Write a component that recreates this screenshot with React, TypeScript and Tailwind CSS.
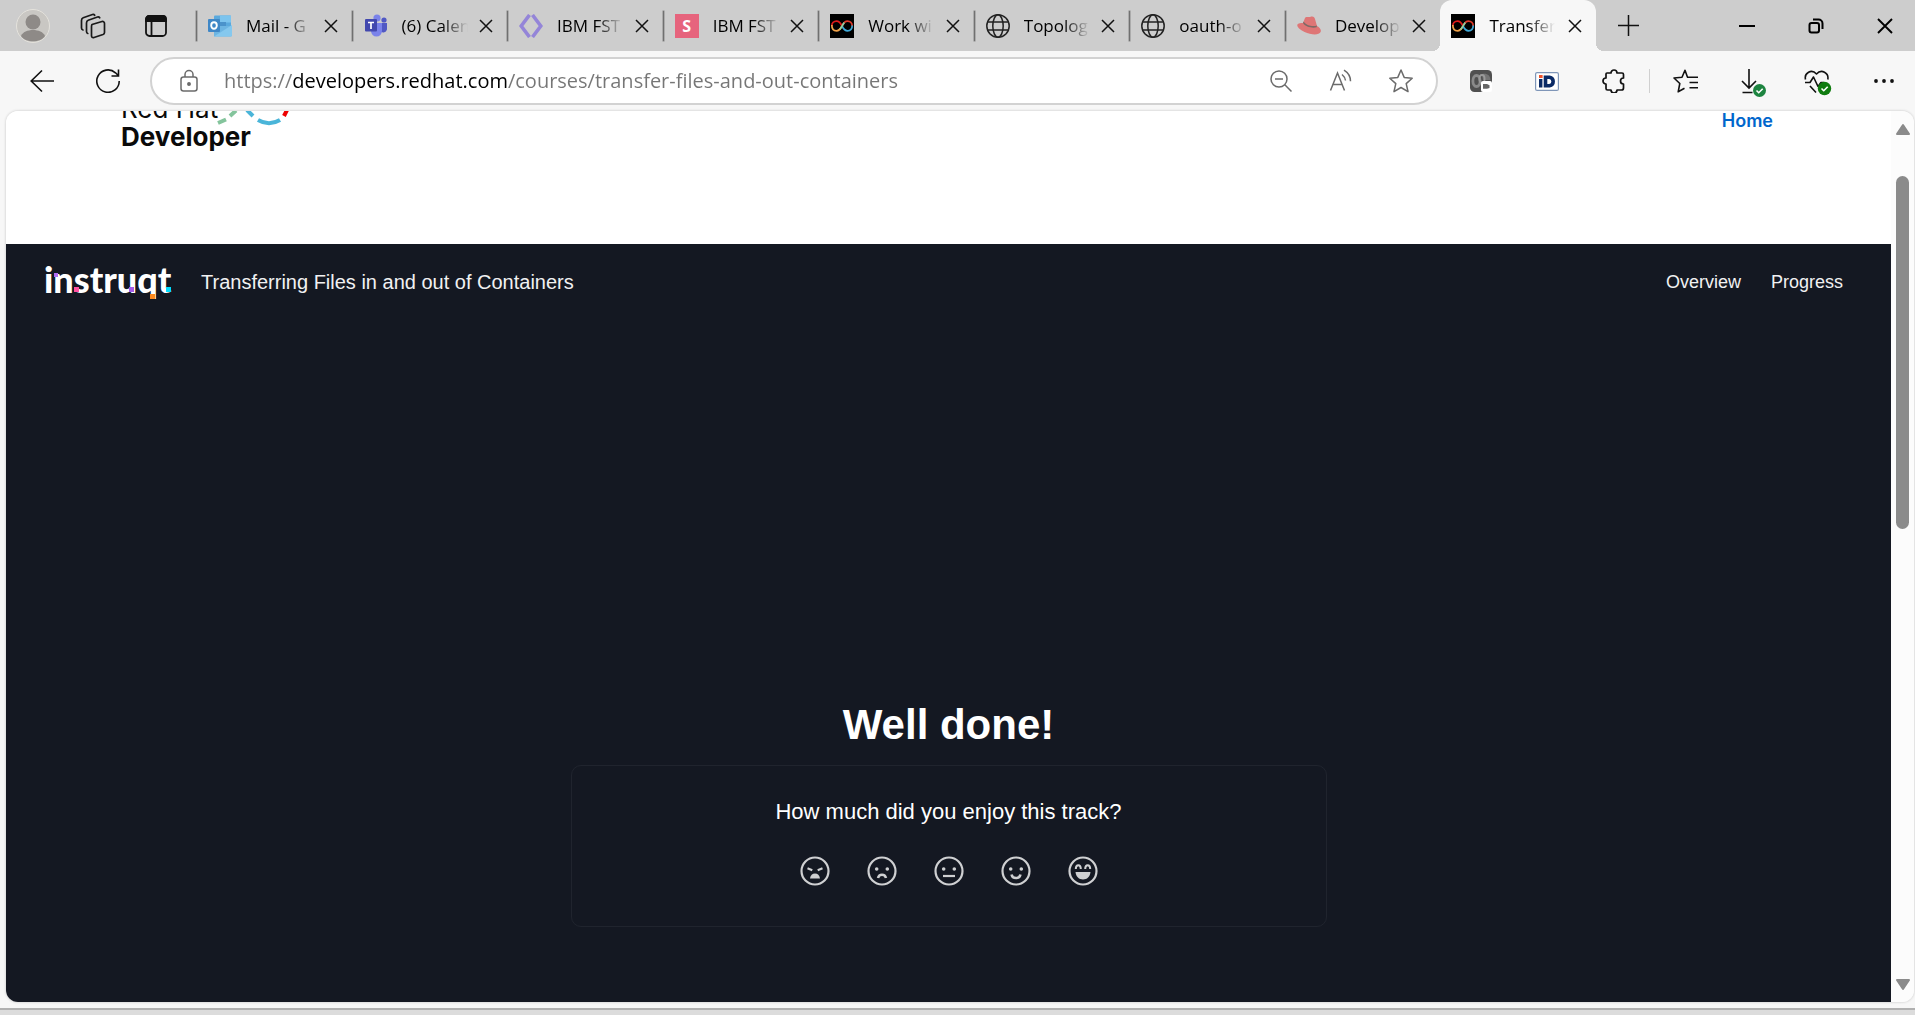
import type { ReactNode } from "react";

const ui = "font-['Open_Sans','Noto_Sans',sans-serif]";

function Outlook() {
  return (
    <svg viewBox="0 0 24 24" className="size-6" aria-hidden="true">
      <rect x="6" y="1.500" width="17" height="20.500" rx="1" fill="#5aa9dd" />
      <rect x="12" y="1.500" width="11" height="7" fill="#7cc4ee" />
      <rect x="12" y="8" width="6" height="6" fill="#4b93cb" />
      <path d="M6 12l18 0v9a1.500 1.500 0 0 1-1.500 1.500H6z" fill="#6db5e2" />
      <path d="M6 22.500L24 11v10a1.500 1.500 0 0 1-1.500 1.500z" fill="#85c8ee" />
      <rect x="0" y="5" width="12" height="13" rx="1" fill="#3f87c6" />
      <ellipse cx="6" cy="11.500" rx="2.800" ry="3.200" fill="none" stroke="#fff" strokeWidth="1.900" />
    </svg>
  );
}

function Teams() {
  return (
    <svg viewBox="0 0 24 24" className="size-6" aria-hidden="true">
      <circle cx="20" cy="6" r="2.600" fill="#5058c4" />
      <path d="M16 9h7v6.500a3.800 3.800 0 0 1-7 1z" fill="#5058c4" />
      <circle cx="13" cy="4" r="3.600" fill="#7a82ea" />
      <path d="M7 9h11v8a5.500 5.500 0 0 1-11 0z" fill="#7a82ea" />
      <rect x="1" y="5" width="12" height="12.500" rx="1" fill="#4248ae" />
      <path d="M4 8.500h6M7 8.500v6.500" stroke="#fff" strokeWidth="1.700" />
    </svg>
  );
}

function Brackets() {
  return (
    <svg viewBox="0 0 24 24" className="size-6" aria-hidden="true" fill="none" stroke="#9485d8" strokeWidth="3.600">
      <path d="M10.500 1L2.200 12l8.300 11M13.500 1L21.800 12l-8.300 11" />
    </svg>
  );
}

function Square() {
  return (
    <span className={`flex size-6 items-center justify-center bg-[#e6647d] text-base font-bold leading-none text-white ${ui}`}>S</span>
  );
}

function Infinity() {
  return (
    <svg viewBox="0 0 24 24" className="size-6" aria-hidden="true" fill="none" strokeWidth="1.700">
      <rect width="24" height="24" fill="#000" />
      <path d="M1.800 12C1.800 9 4 7.200 6.500 7.200S10.500 9 12 12" stroke="#e01a1a" />
      <path d="M1.800 11C1.800 15 4 16.800 6.500 16.800S10.500 15 12 12" stroke="#f0a24a" />
      <path d="M12 12C13.500 9 15 7.200 17.500 7.200S22.200 9 22.200 12" stroke="#e03a2a" />
      <path d="M12 12C13.500 15 15 16.800 17.500 16.800S22.200 15 22.200 11.500" stroke="#3fa9d8" />
      <path d="M9.800 15.300C11 14 13 10 14.300 8.600" stroke="#8fd0a0" />
    </svg>
  );
}

function Globe() {
  return (
    <svg viewBox="0 0 24 24" className="size-6" aria-hidden="true" fill="none" stroke="#222" strokeWidth="1.500">
      <circle cx="12" cy="12" r="11.200" />
      <ellipse cx="12" cy="12" rx="5.200" ry="11.200" />
      <path d="M1.800 8h20.400M1.800 16h20.400" />
    </svg>
  );
}

function Fedora() {
  return (
    <svg viewBox="0 0 24 24" className="size-6" aria-hidden="true">
      <path d="M6 9L8 4c1-2 3-.6 5-1 3-1 4.500 0 5 2l2 7c3 1.500 4.500 4 3.600 6-1.600 3.500-9.600 3-16 0C2 15.500-.5 12.500.4 10.500 1 9 4 9 6 9z" fill="#de7676" />
      <path d="M6 9c2 3.500 9 5.600 13.600 4.300L20 11.500c-4 1.500-11 0-13.400-4z" fill="#7d6a66" />
    </svg>
  );
}

function Cross() {
  return (
    <svg viewBox="0 0 14 14" className="size-[14px]" aria-hidden="true" fill="none" stroke="#111" strokeWidth="1.500">
      <path d="M1 1l12 12M13 1L1 13" />
    </svg>
  );
}

const tabs: { title: string; icon: ReactNode; active?: boolean }[] = [
  { title: "Mail - G", icon: <Outlook /> },
  { title: "(6) Calen", icon: <Teams /> },
  { title: "IBM FST", icon: <Brackets /> },
  { title: "IBM FST", icon: <Square /> },
  { title: "Work wi", icon: <Infinity /> },
  { title: "Topolog", icon: <Globe /> },
  { title: "oauth-o", icon: <Globe /> },
  { title: "Develop", icon: <Fedora /> },
  { title: "Transfer", icon: <Infinity />, active: true },
];

function TabStrip() {
  return (
    <header className="flex h-[51px] shrink-0 bg-[#cdcdcd]">
      <div className="flex w-[196px] shrink-0 items-center gap-[30px] pl-4">
        <button aria-label="Profile" className="size-[34px]">
          <svg viewBox="0 0 34 34" className="size-[34px]">
            <circle cx="17" cy="17" r="16.500" fill="#c9c7c3" stroke="#e4e2dc" />
            <circle cx="17" cy="13" r="7.500" fill="#8e8a87" />
            <path d="M5 27c3-8 21-8 24 0-4 7-20 7-24 0z" fill="#8e8a87" />
          </svg>
        </button>
        <button aria-label="Workspaces" className="size-[26px]">
          <svg viewBox="0 0 26 26" className="size-[26px]" fill="none" stroke="#1a1a1a" strokeWidth="1.700" strokeLinejoin="round" strokeLinecap="round">
            <path d="M12 11.500l10-3a2 2 0 0 1 2.500 2v9c0 1-.5 1.600-1.500 2l-9 3c-1.500.5-2.500-.3-2.500-1.700v-9c0-1.100.2-1.800.5-2.300z" />
            <path d="M7.800 20.500c-1-.3-1.300-1-1.300-2V10c0-1.500.5-2.400 1.700-2.800L17.500 4c1-.3 1.700 0 2.200.8" />
            <path d="M3 17c-1-.3-1.500-1-1.500-2V7.500c0-1.500.5-2.300 1.700-2.700L12.500 1.500c1-.3 1.700 0 2.200.8" />
          </svg>
        </button>
        <button aria-label="Tab actions" className="ml-2 size-6">
          <svg viewBox="0 0 24 24" className="size-6" fill="none" stroke="#111" strokeWidth="1.800">
            <rect x="2" y="2" width="20" height="20" rx="3.500" />
            <path d="M2 7V5a3 3 0 0 1 3-3h14a3 3 0 0 1 3 3v2z" fill="#111" />
            <path d="M7.500 7v15" />
          </svg>
        </button>
      </div>
      <nav aria-label="Tabs" className="grid min-w-0 flex-1 grid-cols-9">
        {tabs.map((t, i) => (
          <div key={i} className={t.active ? "relative flex items-center rounded-t-xl bg-[#f7f7f7]" : "relative flex items-center"}>
            {t.active ? (
              <>
                <span className="absolute -left-2 bottom-0 size-2 bg-[radial-gradient(circle_at_top_left,transparent_8px,#f7f7f7_8px)]" />
                <span className="absolute -right-2 bottom-0 size-2 bg-[radial-gradient(circle_at_top_right,transparent_8px,#f7f7f7_8px)]" />
              </>
            ) : (
              <span className="h-[30px] w-px bg-[#707070] ring-[0.5px] ring-[#8a8a8a]" />
            )}
            <button className="ml-[11px] flex min-w-0 flex-1 items-center gap-[14px]">
              <span className="shrink-0">{t.icon}</span>
              <span className={`w-[66px] overflow-hidden whitespace-nowrap text-left text-[17px] leading-6 text-black mask-[linear-gradient(to_right,black_60%,transparent)] ${ui}`}>
                {t.title}
              </span>
            </button>
            <button aria-label={`Close ${t.title}`} className="mr-[14px] shrink-0">
              <Cross />
            </button>
          </div>
        ))}
      </nav>
      <div className="flex w-[319px] shrink-0 items-center">
        <button aria-label="New tab" className="ml-[22px]">
          <svg viewBox="0 0 21 21" className="size-[21px]" stroke="#111" strokeWidth="1.500"><path d="M10.500 0v21M0 10.500h21" /></svg>
        </button>
        <div className="ml-auto mr-[22px] flex items-center gap-[53px]">
          <button aria-label="Minimize">
            <svg viewBox="0 0 16 16" className="size-4" stroke="#000" strokeWidth="2"><path d="M0 8h16" /></svg>
          </button>
          <button aria-label="Restore">
            <svg viewBox="0 0 16 16" className="size-4" fill="none" stroke="#000" strokeWidth="2">
              <rect x="1.500" y="5" width="9.500" height="9.500" rx="2" />
              <path d="M5 1.500h5.500a4 4 0 0 1 4 4V11" />
            </svg>
          </button>
          <button aria-label="Close window">
            <svg viewBox="0 0 16 16" className="size-4" stroke="#000" strokeWidth="1.900"><path d="M1 1l14 14M15 1L1 15" /></svg>
          </button>
        </div>
      </div>
    </header>
  );
}

function Tool({ label, children }: { label: string; children: ReactNode }) {
  return (
    <button aria-label={label} className="flex w-8 shrink-0 justify-center">
      {children}
    </button>
  );
}

function Toolbar() {
  return (
    <div className="flex h-[60px] shrink-0 items-center bg-[#f7f7f7]">
      <div className="flex w-[150px] shrink-0 gap-[34px] pl-[26px]">
        <Tool label="Back">
          <svg viewBox="0 0 24 24" className="size-6" fill="none" stroke="#111" strokeWidth="1.600">
            <path d="M24 12H1M12 1.500L1.200 12 12 22.500" />
          </svg>
        </Tool>
        <Tool label="Refresh">
          <svg viewBox="0 0 24 24" className="size-6" fill="none" stroke="#111" strokeWidth="1.600">
            <path d="M23.200 12A11.200 11.200 0 1 1 19.500 3.800l3 3M22.500.500v6.500h-7" />
          </svg>
        </Tool>
      </div>
      <form className="flex h-12 min-w-0 flex-1 items-center rounded-full border-2 border-[#d2d2d2] bg-white" onSubmit={(e) => e.preventDefault()}>
        <svg viewBox="0 0 18 24" className="ml-7 h-6 w-[18px] shrink-0" fill="none" stroke="#6b6b6b" strokeWidth="1.500" aria-hidden="true">
          <rect x="1" y="8" width="16" height="14" rx="2.500" />
          <path d="M5 8V5.500a4 4 0 0 1 8 0V8" />
          <circle cx="9" cy="15" r="1.200" fill="#6b6b6b" />
        </svg>
        <input
          aria-label="Address"
          defaultValue="https://developers.redhat.com/courses/transfer-files-and-out-containers"
          className={`ml-[26px] min-w-0 flex-1 bg-[linear-gradient(to_right,#767676_69px,#000_69px,#000_284px,#767676_284px)] bg-clip-text text-xl leading-7 text-transparent outline-none ${ui}`}
        />
        <div className="mr-[19px] flex items-center gap-7">
          <Tool label="Zoom out">
            <svg viewBox="0 0 24 24" className="size-6" fill="none" stroke="#6b6b6b" strokeWidth="1.500">
              <circle cx="10" cy="10" r="8" />
              <path d="M6 10h8M15.800 15.800L22.500 22.500" />
            </svg>
          </Tool>
          <Tool label="Read aloud">
            <svg viewBox="0 0 24 24" className="size-6" fill="none" stroke="#6b6b6b" strokeWidth="1.500">
              <path d="M1.500 21.500L8.500 4l7 17.500M4 15.500h9M13 5.500q3 2.500 3.500 6M15 1.200q6.500 4 6.500 11" />
            </svg>
          </Tool>
          <Tool label="Favorite this page">
            <svg viewBox="0 0 24 24" className="size-6" fill="none" stroke="#6b6b6b" strokeWidth="1.500" strokeLinejoin="round">
              <path d="M12 1l3.200 7.400 8 .8-6 5.400 1.800 8L12 18.500 5 22.600l1.800-8-6-5.400 8-.8z" />
            </svg>
          </Tool>
        </div>
      </form>
      <div className="flex w-[477px] shrink-0 items-center pl-[27px] pr-[15px]">
        <Tool label="Screen recorder">
          <svg viewBox="0 0 22 22" className="size-[22px]">
            <rect width="22" height="22" rx="4.500" fill="#505050" />
            <path d="M12 4c5-1 8 1 8.500 6H13z" fill="#757575" />
            <ellipse cx="6.500" cy="11" rx="3.600" ry="5.500" fill="none" stroke="#8a8a8a" strokeWidth="2.800" />
            <ellipse cx="12" cy="9" rx="2.600" ry="4" fill="none" stroke="#9a9a9a" strokeWidth="1.800" />
            <rect x="11" y="11" width="11" height="11" rx="2" fill="#fff" />
            <path d="M13 14h4l2.500 1.300v2.700l-2.500.8h-4z" fill="#666" />
          </svg>
        </Tool>
        <span className="ml-[34px] flex">
          <Tool label="iD extension">
            <svg viewBox="0 0 24 19" className="h-[19px] w-6">
              <rect x=".6" y=".6" width="22.800" height="17.800" rx="1.500" fill="#fff" stroke="#7f96b8" strokeWidth="1.200" />
              <rect x="4" y="3" width="3.600" height="3" fill="#f0522b" />
              <rect x="4" y="7" width="3.400" height="8.500" fill="#0a2a66" />
              <path d="M10.500 5.200h4a4.300 4.300 0 0 1 0 8.500h-4z" fill="none" stroke="#0a2a66" strokeWidth="3.600" />
            </svg>
          </Tool>
        </span>
        <span className="ml-[35px] flex">
          <Tool label="Extensions">
            <svg viewBox="0 0 24 24" className="size-6" fill="none" stroke="#111" strokeWidth="1.700" strokeLinejoin="round">
              <path d="M5 4h4a3 3 0 0 1 6 0h5a1.500 1.500 0 0 1 1.500 1.500V9a3 3 0 1 0 0 6v4a2 2 0 0 1-2 2H15a3 3 0 0 1-6 0H5.500A1.500 1.500 0 0 1 4 19.500V15a3 3 0 0 1 0-6V5a1 1 0 0 1 1-1z" />
            </svg>
          </Tool>
        </span>
        <span className="ml-[19px] h-6 w-[2px] bg-[#d0d0d0]" />
        <span className="ml-[19px] flex">
          <Tool label="Favorites">
            <svg viewBox="0 0 25 24" className="h-6 w-[25px]" fill="none" stroke="#111" strokeWidth="1.600" strokeLinejoin="round">
              <path d="M14.500 8.200L12 1.200 9 8.200l-8 .8 5.800 5.500-1.600 8.300 6.300-3.500M14 8.200h11M16.500 13.500H25M16.500 18.800H25" />
            </svg>
          </Tool>
        </span>
        <span className="ml-[37px] flex">
          <Tool label="Downloads">
            <svg viewBox="0 0 26 28" className="mt-1 h-7 w-[26px]" fill="none" stroke="#111" strokeWidth="1.600">
              <path d="M8 0v19M1 12l7 7 7-7M1.500 23.500h10" />
              <circle cx="18.500" cy="21.500" r="6.500" fill="#1d8440" stroke="none" />
              <path d="M15.500 21.500l2.200 2.200 4-4" stroke="#fff" />
            </svg>
          </Tool>
        </span>
        <span className="ml-8 flex">
          <Tool label="Browser essentials">
            <svg viewBox="0 0 28 26" className="mt-1 h-[26px] w-7" fill="none" stroke="#111" strokeWidth="1.600" strokeLinejoin="round">
              <path d="M1.500 9.500C0 3 7.500-1.500 12.500 4 17.500-1.500 25 3 23.800 9.500M1 12.500h5l3.500-5.500 4.500 9.500 3-4h3M6 16l6 6.500" />
              <circle cx="20.500" cy="18.500" r="6.700" fill="#107c10" stroke="none" />
              <path d="M17.500 18.500l2.200 2.200 4-4" stroke="#fff" />
            </svg>
          </Tool>
        </span>
        <span className="ml-[34px] flex">
          <Tool label="Settings and more">
            <svg viewBox="0 0 20 20" className="size-5" fill="#111">
              <circle cx="2" cy="10" r="1.900" /><circle cx="10" cy="10" r="1.900" /><circle cx="18" cy="10" r="1.900" />
            </svg>
          </Tool>
        </span>
      </div>
    </div>
  );
}

function SiteHeader() {
  return (
    <div className="flex h-[133px] shrink-0 justify-between overflow-hidden bg-white pl-[115px] pr-[118px]">
      <a href="#developer" className="-mt-4 flex items-start font-['Inter',sans-serif] text-[26px] leading-7 text-[#0a0a0a]">
        <span>
          <span className="block">Red Hat</span>
          <span className="block font-bold">Developer</span>
        </span>
        <svg viewBox="0 0 76 31" className="-ml-9 h-[31px] w-[76px] shrink-0" fill="none" strokeWidth="4" aria-hidden="true">
          <path d="M3 28l8-3.500M15 21l6-5.500" stroke="#84c49c" />
          <path d="M32 15l6 6" stroke="#4ab5d9" />
          <path d="M43 25q11 6.500 22 0" stroke="#4ab5d9" />
          <path d="M69 21l4-8" stroke="#ee0000" />
        </svg>
      </a>
      <a href="#home" className="-mt-[2px] self-start font-['Inter',sans-serif] text-lg font-semibold leading-6 text-[#0066cc]">Home</a>
    </div>
  );
}

const eyes = (
  <>
    <circle cx="9.700" cy="13" r="1.800" fill="currentColor" stroke="none" />
    <circle cx="20.300" cy="13" r="1.800" fill="currentColor" stroke="none" />
  </>
);

const faces: { label: string; art: ReactNode }[] = [
  {
    label: "Terrible",
    art: (
      <>
        <path d="M7.500 12.300l4.800 1.900M22.500 12.300l-4.800 1.900" strokeWidth="2.200" />
        <path d="M10 22.500q.8-5 5-5t5 5z" fill="currentColor" stroke="none" />
      </>
    ),
  },
  { label: "Bad", art: <>{eyes}<path d="M11 22c1-4.500 7-4.500 8 0" strokeWidth="2.500" /></> },
  { label: "Okay", art: <>{eyes}<path d="M9 20h12" /></> },
  { label: "Good", art: <>{eyes}<path d="M10.500 18.500c1 4.800 8 4.800 9 0" strokeWidth="2.500" /></> },
  {
    label: "Great",
    art: (
      <>
        <path d="M7.800 13c0-5 5-5 5 0M17.200 13c0-5 5-5 5 0" strokeWidth="2" />
        <path d="M7.500 16h15c-.5 4.800-3.500 7.500-7.500 7.500S8 20.800 7.500 16z" fill="currentColor" stroke="none" />
      </>
    ),
  },
];

function Track() {
  return (
    <main className="flex flex-1 flex-col bg-[#141822] font-['Liberation_Sans',sans-serif] text-white">
      <div className="flex h-[76px] shrink-0 items-center justify-between pl-[38px] pr-12">
        <div className="flex items-center gap-[30px]">
          <a href="#instruqt" aria-label="instruqt" className="relative w-[127px] pb-1.5 font-['Lato',sans-serif] text-4xl font-black leading-9">
            instruqt
            <span className="absolute left-[10px] top-3 size-1 bg-[#b06cf0]" />
            <span className="absolute left-[30px] top-[26px] size-[5px] bg-[#ff4fa0]" />
            <span className="absolute left-[85px] top-[26px] size-[5px] bg-[#a45ce8]" />
            <span className="absolute left-[106px] top-[33px] size-[5px] bg-[#ff8a1f]" />
            <span className="absolute right-0 top-[26px] size-[5px] bg-[#00dcff]" />
          </a>
          <h1 className="text-xl leading-6 text-[#f1f1f2]">Transferring Files in and out of Containers</h1>
        </div>
        <nav className="flex gap-[30px] text-lg leading-6 text-[#f1f1f2]">
          <a href="#overview">Overview</a>
          <a href="#progress">Progress</a>
        </nav>
      </div>
      <div className="flex flex-1 flex-col items-center justify-end pb-[75px]">
        <h2 className="mb-4 text-[42px] font-bold leading-[48px]">Well done!</h2>
        <section className="flex w-full max-w-[756px] flex-col items-center rounded-[10px] border border-[#20242e] pb-10 pt-8">
          <p className="text-[22px] leading-7">How much did you enjoy this track?</p>
          <div className="mt-[30px] flex gap-[37px] text-[#cfd0d2]">
            {faces.map((f) => (
              <button key={f.label} aria-label={f.label}>
                <svg viewBox="0 0 30 30" className="size-[30px]" fill="none" stroke="currentColor" strokeWidth="2.200">
                  <circle cx="15" cy="15" r="13.500" />
                  {f.art}
                </svg>
              </button>
            ))}
          </div>
        </section>
      </div>
    </main>
  );
}

function ScrollRail() {
  return (
    <div className="flex w-[23px] shrink-0 flex-col items-center bg-[#fcfcfc] pb-[11px] pt-3" aria-hidden="true">
      <svg viewBox="0 0 14 12" className="h-3 w-[14px]" fill="#8b8b8b" stroke="#8b8b8b" strokeWidth="2" strokeLinejoin="round"><path d="M7 2l6 9H1z" /></svg>
      <div className="flex min-h-0 w-[13px] flex-1 flex-col pt-[41px]">
        <div className="h-[44%] rounded-full bg-[#8b8b8b]" />
      </div>
      <svg viewBox="0 0 14 12" className="h-3 w-[14px]" fill="#8b8b8b" stroke="#8b8b8b" strokeWidth="2" strokeLinejoin="round"><path d="M7 10l6-9H1z" /></svg>
    </div>
  );
}

export default function App() {
  return (
    <div className="flex h-screen flex-col overflow-hidden bg-[#f7f7f7]">
      <TabStrip />
      <Toolbar />
      <div className="ml-[6px] mr-px flex min-h-0 flex-1 overflow-hidden rounded-xl shadow-[0_0_2px_1px_#dedede]">
        <div className="flex min-w-0 flex-1 flex-col">
          <SiteHeader />
          <Track />
        </div>
        <ScrollRail />
      </div>
      <div className="mt-[6px] h-[7px] shrink-0 border-t-2 border-[#b0b0b0] bg-[#dcdcdc]" />
    </div>
  );
}
